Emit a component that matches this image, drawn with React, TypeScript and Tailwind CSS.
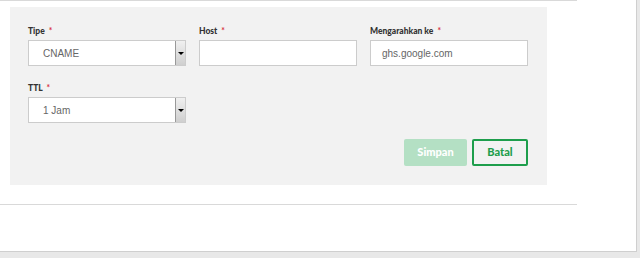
import React from 'react';

const Label = ({ text }: { text: string }) => (
  <div className="h-[10px] mb-[4px] text-[8.5px] leading-[10px] font-black text-[#333] font-['Lato',sans-serif]">
    {text} <span className="text-[#d8323f] font-bold ml-[2px]">*</span>
  </div>
);

const SelectBox = ({ value }: { value: string }) => (
  <div className="flex h-[26px] w-[158px] bg-white border border-[#ccc]">
    <div className="flex-1 pl-[14px] flex items-center text-[10px] text-[#666] font-['Liberation_Sans',sans-serif]">
      {value}
    </div>
    <div className="w-[10px] h-full flex items-center justify-center border-l border-[#999] bg-gradient-to-b from-[#f0f0f0] to-[#cfcfcf]">
      <div className="w-0 h-0 border-l-[3px] border-r-[3px] border-t-[3px] border-l-transparent border-r-transparent border-t-black" />
    </div>
  </div>
);

const TextBox = ({ value }: { value?: string }) => (
  <div className="flex items-center h-[26px] w-[158px] bg-white border border-[#ccc] pl-[11px] text-[10px] text-[#666] font-['Liberation_Sans',sans-serif]">
    {value}
  </div>
);

export default function App() {
  return (
    <div className="w-[640px] h-[258px] bg-[#e8e8e8] overflow-hidden">
      <div className="w-[637px] h-[252px] bg-white border-r border-b border-[#cfcfcf]">
        <div className="w-[577px] border-t border-[#d9d9d9] pt-[6px]">
          <div className="ml-[10px] w-[537px] h-[178px] bg-[#f2f2f2] pl-[18px] pr-[19px] pt-[19px]">
            <div className="grid grid-cols-[158px_158px_158px] gap-x-[13px]">
              <div>
                <Label text="Tipe" />
                <SelectBox value="CNAME" />
              </div>
              <div>
                <Label text="Host" />
                <TextBox />
              </div>
              <div>
                <Label text="Mengarahkan ke" />
                <TextBox value="ghs.google.com" />
              </div>
            </div>
            <div className="mt-[17px]">
              <Label text="TTL" />
              <SelectBox value="1 Jam" />
            </div>
            <div className="mt-[16px] flex justify-end gap-[5px] font-['Lato',sans-serif]">
              <button className="h-[27px] w-[63px] rounded-[2px] bg-[#b4e0c4] text-white text-[11px] font-black">
                Simpan
              </button>
              <button className="h-[27px] w-[56px] rounded-[2px] border-2 border-[#1e9e4c] text-[#1e9e4c] text-[11px] font-black">
                Batal
              </button>
            </div>
          </div>
          <div className="mt-[19px] border-t border-[#d9d9d9]" />
        </div>
      </div>
    </div>
  );
}
